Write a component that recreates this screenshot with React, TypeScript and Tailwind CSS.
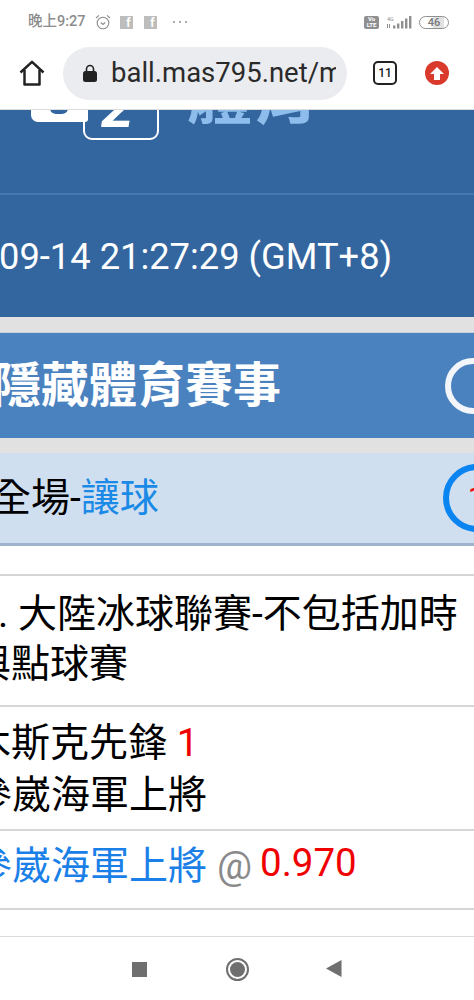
const CJK = "font-['Roboto','Noto_Sans_CJK_TC','Noto_Sans_CJK_SC',sans-serif]";

function FbBox({ className }: { className: string }) {
  return (
    <div className={`w-[13px] h-[13px] bg-[#bdbdbd] text-white text-[12px] font-bold leading-[14px] text-right pr-[2px] overflow-hidden ${className}`}>
      f
    </div>
  );
}

function StatusBar() {
  return (
    <div className="h-[46px] flex items-center justify-between pl-[28px] pr-[25px] pb-[2px]">
      <div className="flex items-center text-[#8c8c8c]">
        <span className="text-[14.5px] font-medium leading-none">晚上9:27</span>
        <svg className="ml-[9px]" width="16" height="16" viewBox="0 0 16 16" fill="none" stroke="#8c8c8c" strokeWidth="1.1">
          <circle cx="8" cy="9" r="5.8" />
          <path d="M5.8 8.5 8 10.5l2.2-2M1 4l3-2.6M15 4l-3-2.6" />
        </svg>
        <FbBox className="ml-[9px]" />
        <FbBox className="ml-[11px]" />
        <span className="ml-[16px] flex gap-[4px]">
          <i className="w-[2px] h-[2px] rounded-full bg-[#8c8c8c]" />
          <i className="w-[2px] h-[2px] rounded-full bg-[#8c8c8c]" />
          <i className="w-[2px] h-[2px] rounded-full bg-[#8c8c8c]" />
        </span>
      </div>
      <div className="flex items-center">
        <div className="w-[15px] h-[13px] rounded-[2px] bg-[#8f8f8f] text-white text-[6px] font-bold leading-[6px] text-center flex flex-col justify-center">
          <span>Vo</span>
          <span>LTE</span>
        </div>
        <svg className="ml-[8px]" width="25" height="14" viewBox="0 0 25 14" fill="#8f8f8f">
          <text x="0" y="5.5" fontSize="5.5" fontFamily="Roboto">4G</text>
          <rect x="0" y="9" width="1" height="4" />
          <rect x="2" y="9" width="1" height="4" />
          <rect x="6" y="10.5" width="2.4" height="3" />
          <rect x="10" y="8.5" width="2.4" height="5" />
          <rect x="14" y="6" width="2.4" height="7.5" />
          <rect x="18" y="3.5" width="2.4" height="10" />
          <rect x="22" y="1" width="2.4" height="12.5" />
        </svg>
        <div className="ml-[7px] w-[30px] h-[13px] rounded-full border border-[#8f8f8f] text-[#777] text-[11px] font-medium leading-[11px] flex items-center justify-center bg-[linear-gradient(90deg,#fff_0,#fff_46%,#e2e2e2_46%,#e2e2e2_86%,#fff_86%)]">
          46
        </div>
      </div>
    </div>
  );
}

function Toolbar() {
  return (
    <div className="h-[64px] flex items-center border-b border-[#dcdcdc] pb-[9px]">
      <svg className="ml-[19px]" width="26" height="26" viewBox="0 0 26 26" fill="none" stroke="#222" strokeWidth="2.5" strokeLinejoin="round">
        <path d="M1.5 12.5 13 1.8l11.5 10.7" />
        <path d="M5.5 10v14.5h15V10" />
      </svg>
      <div className="ml-[18px] w-[284px] h-[53px] rounded-full bg-[#ebecef] flex items-center pl-[20px] pr-[11px] overflow-hidden">
        <svg className="shrink-0" width="14" height="18" viewBox="0 0 14 18">
          <path d="M3.5 8V5a3.5 3.5 0 0 1 7 0v3" fill="none" stroke="#222" strokeWidth="1.6" />
          <rect x="0" y="7" width="14" height="11" rx="2.5" fill="#222" />
        </svg>
        <span className="ml-[14px] text-[27.5px] leading-[36px] text-[#2a2a2a] whitespace-nowrap overflow-hidden">ball.mas795.net/m</span>
      </div>
      <div className="ml-[26px] w-[24px] h-[24px] rounded-[5px] border-[2px] border-[#222] text-[#222] text-[12px] font-medium flex items-center justify-center">
        11
      </div>
      <div className="ml-[28px] w-[24px] h-[24px] rounded-full bg-[#d93a2b] flex items-center justify-center">
        <svg width="14" height="13" viewBox="0 0 14 13" fill="#fff">
          <path d="M7 0l7 7H10v6H4V7H0z" />
        </svg>
      </div>
    </div>
  );
}

function Header() {
  return (
    <div className="h-[207px] bg-[#33669f] overflow-hidden">
      <div className="h-[83px] relative">
        <div className="absolute left-[83px] top-[-12px] w-[76px] h-[42px] border-[2px] border-white rounded-b-[9px] overflow-hidden">
          <span className="absolute left-[16px] top-[-22px] text-[58px] leading-[58px] font-bold italic text-white">2</span>
        </div>
        <div className="absolute left-[31px] top-[-10px] w-[57px] h-[22px] bg-white rounded-bl-[7px] rounded-br-[3px]" />
        <div className="absolute left-[50px] top-[-10px] w-[18px] h-[14px] bg-[#33669f] rounded-b-[6px]" />
        <div className="absolute left-[186px] top-[-47px] text-[66px] leading-[66px] font-bold text-[#8ebcec] whitespace-nowrap">
          體育
        </div>
      </div>
      <div className="h-[2px] bg-[#4679b2]" />
      <div className="pt-[38px] -ml-[1px] text-[36.3px] leading-[48px] text-white whitespace-nowrap">09-14 21:27:29 (GMT+8)</div>
    </div>
  );
}

export default function App() {
  return (
    <div className={`w-[474px] h-[1000px] bg-white overflow-hidden flex flex-col ${CJK}`}>
      <StatusBar />
      <Toolbar />
      <Header />

      <div className="h-[15px] bg-[#e1e1e1]" />
      <div className="h-[106px] bg-[#4a82c0] border-t border-[#c9d3de] flex items-center justify-between pr-[4px]">
        <div className="-ml-[7px] text-[48px] leading-none font-bold text-white whitespace-nowrap">隱藏體育賽事</div>
        <div className="w-[56px] h-[56px] rounded-full shrink-0 -mr-[31px] border-[6px] border-[#f2f5f9]" />
      </div>
      <div className="h-[15px] bg-[#e1e1e1]" />
      <div className="h-[93px] bg-[#d0dff0] border-b-[3px] border-[#9fb3cf] flex items-center justify-between pr-[4px]">
        <div className="-ml-[8px] text-[39px] leading-none text-black whitespace-nowrap">
          全場-<span className="text-[#1a8ae6]">讓球</span>
        </div>
        <div className="w-[68px] h-[68px] rounded-full shrink-0 -mr-[41px] border-[6px] border-[#0a84f0] flex items-center justify-center">
          <span className="text-[#ee1111] text-[34px]">1</span>
        </div>
      </div>

      <div className="h-[28px]" />
      <div className="h-[133px] border-t-[2px] border-b-[2px] border-[#d6d6d6] -mb-[2px] pt-[13px] text-[39px] leading-[50px] text-black whitespace-nowrap">
        <div className="-ml-[24px]">1. 大陸冰球聯賽-不包括加時</div>
        <div className="-ml-[28px]">與點球賽</div>
      </div>
      <div className="h-[126px] border-t-[2px] border-b-[2px] border-[#d6d6d6] -mb-[2px] pt-[10px] text-[39px] leading-[52px] text-black whitespace-nowrap">
        <div className="-ml-[28px]">
          木斯克先鋒 <span className="text-[#f00000]">1</span>
        </div>
        <div className="-ml-[27px]">參崴海軍上將</div>
      </div>
      <div className="h-[81px] border-t-[2px] border-b-[2px] border-[#d6d6d6] pt-[9px] text-[39px] leading-[52px] whitespace-nowrap -ml-[27px] flex items-start">
        <span className="text-[#1a80e8]">參崴海軍上將</span>
        <span className="ml-[10px] text-[#8a8a8a]">@</span>
        <span className="ml-[8px] -mt-[3px] text-[38.5px] text-[#f00000]">0.970</span>
      </div>

      <div className="h-[27px]" />
      <div className="flex-1 border-t border-[#dcdcdc] flex items-center justify-center -mt-[1px] pt-[1px]">
        <div className="w-[15px] h-[15px] bg-[#6f6f6f]" />
        <div className="ml-[79px] w-[23px] h-[23px] rounded-full border-[2px] border-[#6f6f6f] flex items-center justify-center">
          <div className="w-[15px] h-[15px] rounded-full bg-[#6f6f6f]" />
        </div>
        <svg className="ml-[77px]" width="16" height="18" viewBox="0 0 16 18" fill="#6f6f6f">
          <path d="M15.5 0v17L0 8.5z" />
        </svg>
      </div>
    </div>
  );
}
